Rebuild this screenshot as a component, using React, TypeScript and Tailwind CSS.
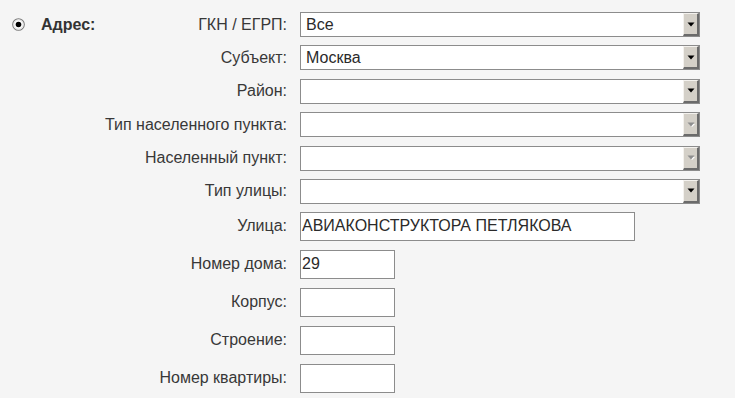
import React from "react";

const SELECTS = [
  { label: "ГКН / ЕГРП:", value: "Все", disabled: false },
  { label: "Субъект:", value: "Москва", disabled: false },
  { label: "Район:", value: "", disabled: false },
  { label: "Тип населенного пункта:", value: "", disabled: true },
  { label: "Населенный пункт:", value: "", disabled: true },
  { label: "Тип улицы:", value: "", disabled: false },
];

const INPUTS = [
  { label: "Улица:", value: "АВИАКОНСТРУКТОРА ПЕТЛЯКОВА", wide: true },
  { label: "Номер дома:", value: "29", wide: false },
  { label: "Корпус:", value: "", wide: false },
  { label: "Строение:", value: "", wide: false },
  { label: "Номер квартиры:", value: "", wide: false },
];

function Radio() {
  return (
    <svg width="13" height="13" viewBox="0 0 13 13" className="shrink-0">
      <circle cx="6.5" cy="6.5" r="5.8" fill="#ffffff" stroke="#7a7a7a" strokeWidth="1.1" />
      <circle cx="6.5" cy="6.5" r="4.6" fill="none" stroke="#dcdcdc" strokeWidth="0.8" />
      <circle cx="6.5" cy="6.5" r="2.8" fill="#000000" />
    </svg>
  );
}

function DropButton({ disabled }: { disabled: boolean }) {
  return (
    <div className="flex h-full w-[16px] items-center justify-center border-t border-l border-t-[#f4f2ee] border-l-[#f4f2ee] border-r-2 border-b-2 border-r-[#6b6b6b] border-b-[#6b6b6b] bg-[#d4d0c8]">
      <svg width="8" height="5" viewBox="0 0 8 5">
        {disabled && <path d="M2 2 L5 5 L8 2 Z" fill="#ffffff" />}
        <path d="M0.5 0.5 L7.5 0.5 L4 4.5 Z" fill={disabled ? "#8e8e8e" : "#000000"} />
      </svg>
    </div>
  );
}

function Select({ value, disabled }: { value: string; disabled: boolean }) {
  return (
    <div className="flex h-[25px] w-[400px] items-stretch border border-[#8c8c8c] bg-white">
      <div className="flex flex-1 items-center pl-[5px] text-[16px] text-[#2a2a2a]">{value}</div>
      <DropButton disabled={disabled} />
    </div>
  );
}

function Label({ children }: { children: React.ReactNode }) {
  return <div className="text-right text-[16px] text-[#383838]">{children}</div>;
}

export default function App() {
  return (
    <div className="min-h-[398px] w-full bg-[#f5f5f5] font-['Liberation_Sans',Arial,sans-serif]">
      <div className="flex pt-[12px]">
        <div className="flex h-[25px] w-[100px] items-center pl-[12px]">
          <Radio />
          <span className="ml-[16px] text-[16px] font-bold text-[#333]">Адрес:</span>
        </div>
        <div className="grid grid-cols-[187px_auto] items-center gap-x-[13px]">
          {SELECTS.map((s, i) => (
            <React.Fragment key={s.label}>
              <div className={i > 0 ? "mt-[8.4px]" : ""}>
                <Label>{s.label}</Label>
              </div>
              <div className={i > 0 ? "mt-[8.4px]" : ""}>
                <Select value={s.value} disabled={s.disabled} />
              </div>
            </React.Fragment>
          ))}
          {INPUTS.map((f, i) => (
            <React.Fragment key={f.label}>
              <div className={i === 0 ? "mt-[8px]" : "mt-[9px]"}>
                <Label>{f.label}</Label>
              </div>
              <div className={i === 0 ? "mt-[8px]" : "mt-[9px]"}>
                <div
                  className={`flex h-[29px] items-center border border-[#8c8c8c] bg-white pl-[1px] text-[16px] text-[#2a2a2a] ${
                    f.wide ? "w-[335px]" : "w-[95px]"
                  }`}
                >
                  {f.value}
                </div>
              </div>
            </React.Fragment>
          ))}
        </div>
      </div>
    </div>
  );
}
